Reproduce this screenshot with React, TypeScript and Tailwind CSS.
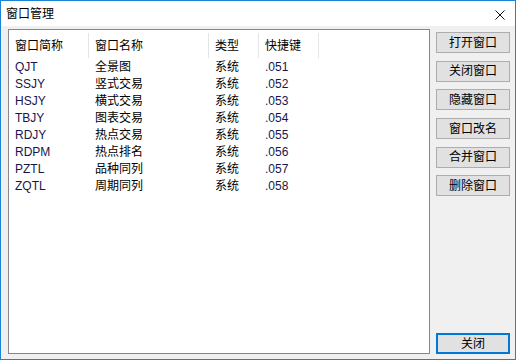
const font = {
  fontFamily: '"Liberation Sans", "Noto Sans CJK SC", sans-serif',
};

type Row = { code: string; name: string; kind: string; key: string };

const rows: Row[] = [
  { code: "QJT", name: "全景图", kind: "系统", key: ".051" },
  { code: "SSJY", name: "竖式交易", kind: "系统", key: ".052" },
  { code: "HSJY", name: "横式交易", kind: "系统", key: ".053" },
  { code: "TBJY", name: "图表交易", kind: "系统", key: ".054" },
  { code: "RDJY", name: "热点交易", kind: "系统", key: ".055" },
  { code: "RDPM", name: "热点排名", kind: "系统", key: ".056" },
  { code: "PZTL", name: "品种同列", kind: "系统", key: ".057" },
  { code: "ZQTL", name: "周期同列", kind: "系统", key: ".058" },
];

const headers = ["窗口简称", "窗口名称", "类型", "快捷键"];
const actions = ["打开窗口", "关闭窗口", "隐藏窗口", "窗口改名", "合并窗口", "删除窗口"];

const cols = "grid grid-cols-[80px_120px_50px_60px]";
const buttonClass =
  "flex h-[21px] w-[74px] items-center justify-center border border-[#adadad] bg-[#e1e1e1] text-[12px] leading-none text-black";

export default function App() {
  return (
    <div className="h-[362px] w-[518px] bg-white" style={font}>
      <div className="flex h-[360px] w-[516px] flex-col border border-[#1883d7] bg-[#f0f0f0]">
        {/* title bar */}
        <div className="flex h-[25px] items-center justify-between bg-white pl-[5px] pr-[10px]">
          <span className="text-[12px] leading-none text-black">窗口管理</span>
          <svg width="10" height="10" viewBox="0 0 10 10" className="mt-[2px]">
            <path d="M0.5 0.5 L9.5 9.5 M9.5 0.5 L0.5 9.5" stroke="#111" strokeWidth="1" />
          </svg>
        </div>

        <div className="flex flex-1 pl-[7px] pr-[5px] pt-[3px] pb-[5px]">
          {/* list */}
          <div className="w-[422px] border border-[#828790] bg-white">
            <div className={`${cols} h-[28px]`}>
              {headers.map((h) => (
                <div
                  key={h}
                  className="mt-[3px] flex h-[25px] items-center border-r border-[#e5e5e5] pl-[6px] text-[12px] leading-none text-black"
                >
                  {h}
                </div>
              ))}
            </div>
            {rows.map((r) => (
              <div key={r.code} className={`${cols} h-[17px] items-center text-[12px] leading-none`}>
                <span className="pl-[6px] text-[#16164f]">{r.code}</span>
                <span className="pl-[6px] text-black">{r.name}</span>
                <span className="pl-[6px] text-black">{r.kind}</span>
                <span className="pl-[6px] text-[#16164f]">{r.key}</span>
              </div>
            ))}
          </div>

          {/* buttons */}
          <div className="ml-[6px] flex flex-col pt-[3px]">
            <div className="flex flex-col gap-[7.7px]">
              {actions.map((a) => (
                <button key={a} type="button" className={buttonClass}>
                  {a}
                </button>
              ))}
            </div>
            <button
              type="button"
              className="mt-auto flex h-[21px] w-[74px] items-center justify-center border-2 border-[#0078d7] bg-[#e1e1e1] text-[12px] leading-none text-black"
            >
              关闭
            </button>
          </div>
        </div>
      </div>
    </div>
  );
}
